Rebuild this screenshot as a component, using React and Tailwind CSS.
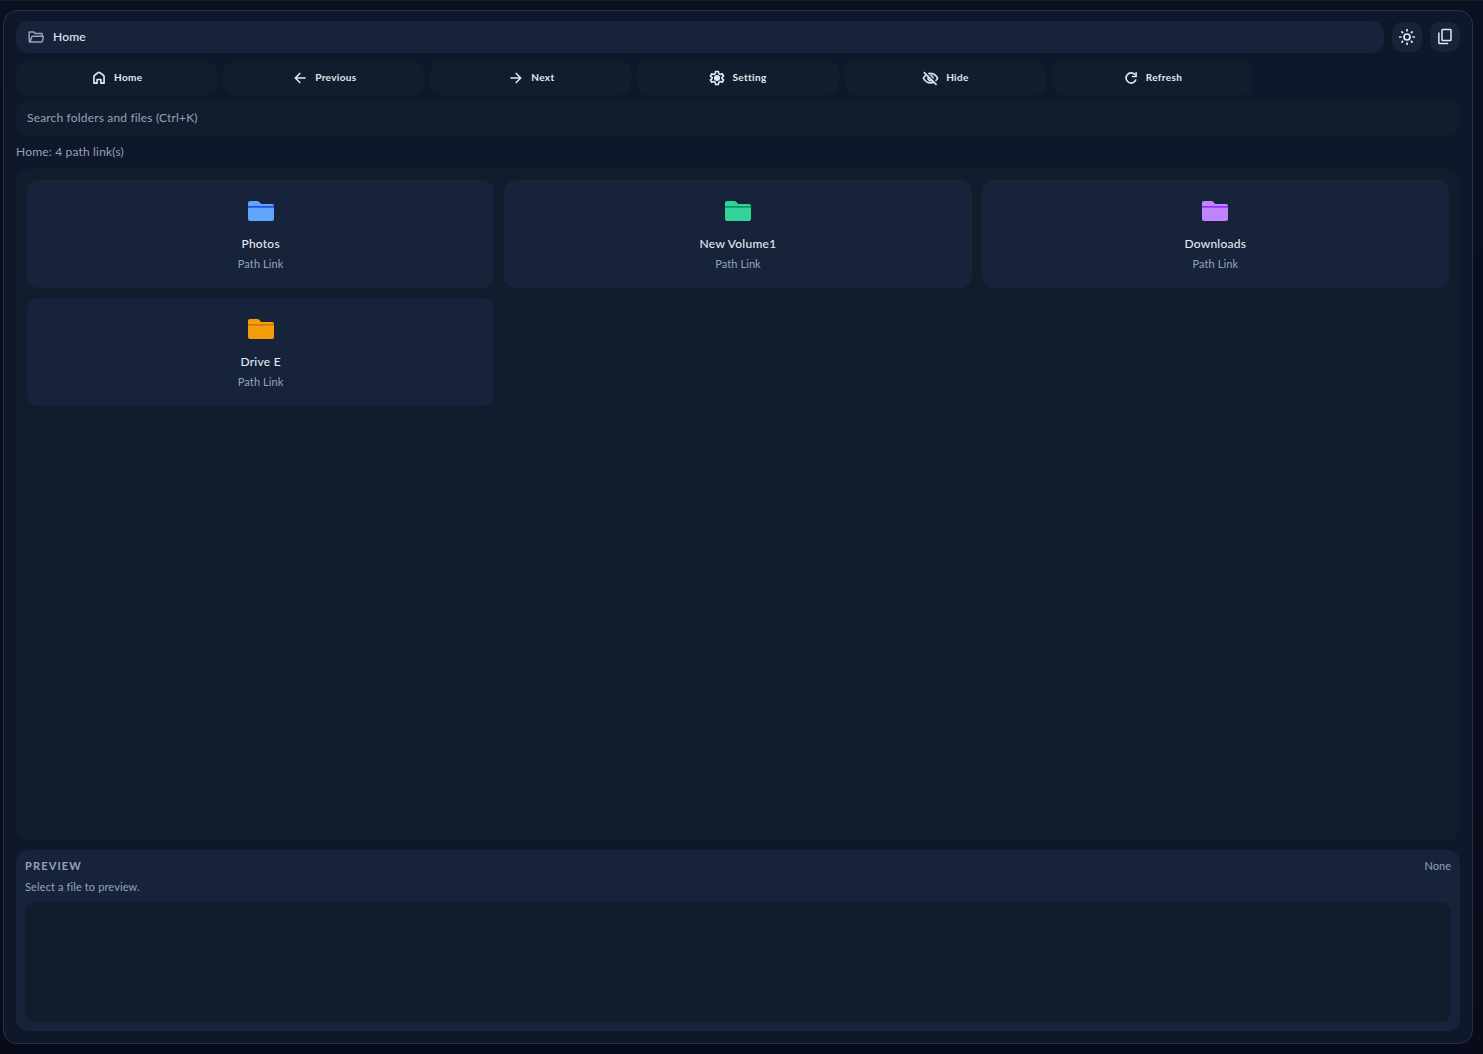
import { useState } from "react";

const iconProps = {
  viewBox: "0 0 24 24",
  fill: "none",
  stroke: "currentColor",
  strokeWidth: 2,
};

const HomeIcon = () => (
  <svg {...iconProps} strokeWidth={2.5} className="h-4 w-4 shrink-0">
    <path d="M4.4 19.8V10c0-.9.4-1.6 1.1-2.1l5.2-3.9c.8-.6 1.8-.6 2.6 0l5.2 3.9c.7.5 1.1 1.2 1.1 2.1v9.8h-4.8v-5.6H9.2v5.6z" strokeLinejoin="round" />
  </svg>
);

const BackIcon = () => (
  <svg {...iconProps} strokeWidth={2.3} className="h-4 w-4 shrink-0">
    <path d="M20.4 12H5M12.4 4.6L5 12l7.4 7.4" />
  </svg>
);

const NextIcon = () => (
  <svg {...iconProps} strokeWidth={2.3} className="h-4 w-4 shrink-0">
    <path d="M3.6 12H19M11.6 4.6L19 12l-7.4 7.4" />
  </svg>
);

const SettingIcon = () => (
  <svg {...iconProps} strokeWidth={2.5} className="h-4 w-4 shrink-0">
    <path
      d="M10 2.2h4l.6 3.2 2.2 1.3 3.1-1.1 2 3.5-2.5 2.1v1.6l2.5 2.1-2 3.5-3.1-1.1-2.2 1.3-.6 3.2h-4l-.6-3.2-2.2-1.3-3.1 1.1-2-3.5 2.5-2.1v-1.6L2.1 9.1l2-3.5 3.1 1.1 2.2-1.3z"
      strokeLinejoin="round"
    />
    <circle cx="12" cy="12" r="4.6" fill="currentColor" stroke="none" />
  </svg>
);

const HideIcon = () => (
  <svg viewBox="0 0 24 24" fill="currentColor" stroke="currentColor" strokeWidth="0.4" className="h-[17px] w-[17px] shrink-0">
    <path d="M12 6a9.77 9.77 0 0 1 8.82 5.5 9.65 9.65 0 0 1-2.41 3.12l1.41 1.41c1.39-1.23 2.49-2.77 3.18-4.53C21.27 7.11 17 4 12 4c-1.27 0-2.49.2-3.64.57l1.65 1.65C10.66 6.09 11.32 6 12 6zm-1.07 1.14L13 9.21c.57.25 1.03.71 1.28 1.28l2.07 2.07c.08-.34.14-.7.14-1.07C16.5 9.01 14.48 7 12 7c-.37 0-.72.05-1.07.14zM2.01 3.87l2.68 2.68A11.74 11.74 0 0 0 1 11.5C2.73 15.89 7 19 12 19c1.52 0 2.98-.29 4.32-.82l3.42 3.42 1.41-1.41L3.42 2.45 2.01 3.87zm7.5 7.5 2.61 2.61c-.04.01-.08.02-.12.02a2.5 2.5 0 0 1-2.5-2.5c0-.05.01-.08.01-.13zm-3.4-3.4 1.75 1.75a4.6 4.6 0 0 0-.36 1.78 4.507 4.507 0 0 0 6.27 4.14l.98.98c-.88.24-1.8.38-2.75.38a9.77 9.77 0 0 1-8.82-5.5c.7-1.43 1.72-2.61 2.93-3.53z" />
  </svg>
);

const RefreshIcon = () => (
  <svg {...iconProps} strokeWidth={2.5} className="h-4 w-4 shrink-0">
    <path d="M18 7A7.6 7.6 0 1 0 19.4 14.4" />
    <path d="M19.6 3.4v6.4h-6.4" />
  </svg>
);

const SunIcon = () => (
  <svg {...iconProps} strokeWidth={2.3} className="h-[18px] w-[18px]">
    <circle cx="12" cy="12" r="4" />
    <path d="M12 1.3v3.5M12 19.2v3.5M1.3 12h3.5M19.2 12h3.5M4.6 4.6l2.1 2.1M17.3 17.3l2.1 2.1M4.6 19.4l2.1-2.1M17.3 6.7l2.1-2.1" />
  </svg>
);

const CopyIcon = () => (
  <svg {...iconProps} className="h-[18px] w-[18px]">
    <rect x="8" y="2" width="12" height="14.8" rx="1" />
    <path d="M3.8 6v13.8a1 1 0 0 0 1 1h11.4" />
  </svg>
);

const OpenFolderIcon = () => (
  <svg viewBox="0 0 16 12" fill="none" stroke="currentColor" strokeWidth="1.5" strokeLinejoin="round" className="h-3 w-4 shrink-0">
    <path d="M14 4.7V2.6H7.4L5.7.9H1.2v9.6M1.2 10.6c.2.4.5.5.8.5h11.2c.6 0 1-.3 1.2-.9l.9-3.8c.2-.7-.3-1.2-1-1.2H4.9c-.6 0-1 .3-1.2.9L2.2 10.6" />
  </svg>
);

const FolderIcon = ({ color, line }) => (
  <svg viewBox="0 0 26 20" className="h-5 w-[26px]">
    <path d="M2 0h7.4c.7 0 1.2.2 1.7.7L13.2 3H24a2 2 0 0 1 2 2v13a2 2 0 0 1-2 2H2a2 2 0 0 1-2-2V2a2 2 0 0 1 2-2z" fill={color} />
    <path d="M0 5h26v1.7H0z" fill={line} />
  </svg>
);

const navItems = [
  { label: "Home", icon: HomeIcon, width: "w-[29px]" },
  { label: "Previous", icon: BackIcon, width: "w-[41px]" },
  { label: "Next", icon: NextIcon, width: "w-[23px]" },
  { label: "Setting", icon: SettingIcon, width: "w-[35px]" },
  { label: "Hide", icon: HideIcon, width: "w-[23px]" },
  { label: "Refresh", icon: RefreshIcon, width: "w-[37px]" },
];

const folders = [
  { name: "Photos", color: "#60a5fa", line: "#1d4ed8" },
  { name: "New Volume1", color: "#34d399", line: "#059669" },
  { name: "Downloads", color: "#c084fc", line: "#9333ea" },
  { name: "Drive E", color: "#f59e0b", line: "#d97706" },
];

const App = () => {
  const [search, setSearch] = useState("");

  return (
    <div className="h-screen border-t border-[#1c1c1c] bg-linear-to-b from-[#0a1020] to-[#080b1a] pt-[9px] pr-[10px] pb-[10px] pl-[3px] font-['Lato',sans-serif] text-[#e2e8f0]">
      <div className="flex h-full flex-col rounded-[14px] border border-[#293145] bg-[#0f172a] px-3 pt-[10px] pb-3">
        <div className="flex items-center gap-2">
          <div className="flex h-8 flex-1 items-center gap-[9px] rounded-xl bg-[#17233b] px-3">
            <span className="text-[#94a3b8]">
              <OpenFolderIcon />
            </span>
            <span className="pb-px text-[12px] leading-4 font-medium tracking-[0.2px]">Home</span>
          </div>
          <button className="flex h-[30px] w-[30px] items-center justify-center rounded-[10px] bg-[#17233b]">
            <SunIcon />
          </button>
          <button className="flex h-[30px] w-[30px] items-center justify-center rounded-[10px] bg-[#17233b]">
            <CopyIcon />
          </button>
        </div>

        <div className="mt-2 grid grid-cols-7 gap-[6px]">
          {navItems.map(({ label, icon: Icon, width }) => (
            <button
              key={label}
              className="flex h-[34px] items-center justify-center gap-[7px] rounded-[10px] bg-[#111c2d] pl-px text-[10px] font-bold tracking-[0.35px]"
            >
              <Icon />
              <span className={`${width} pb-[2px] text-left whitespace-nowrap`}>{label}</span>
            </button>
          ))}
        </div>

        <input
          type="text"
          value={search}
          onChange={(e) => setSearch(e.target.value)}
          placeholder="Search folders and files (Ctrl+K)"
          className="mt-[6px] h-[34px] w-full rounded-[10px] bg-[#111c2d] px-[11px] pb-[2px] text-[12px] tracking-[0.17px] outline-none placeholder:text-[#94a3b8]"
        />
        <p className="mt-[9px] text-[12px] leading-4 tracking-[0.18px] text-[#94a3b8]">Home: 4 path link(s)</p>

        {/* folders */}
        <div className="mt-[9px] grid flex-1 auto-rows-[108px] grid-cols-3 content-start gap-[10px] rounded-xl bg-[#111c2d] p-[11px]">
          {folders.map((folder) => (
            <div key={folder.name} className="flex flex-col items-center rounded-xl bg-[#17233b] pt-[21px]">
              <FolderIcon color={folder.color} line={folder.line} />
              <p className="mt-[15px] text-[12px] leading-4 font-medium tracking-[0.25px]">{folder.name}</p>
              <p className="mt-1 text-[11px] leading-4 tracking-[0.1px] text-[#94a3b8]">Path Link</p>
            </div>
          ))}
        </div>

        {/* preview */}
        <div className="mt-[10px] h-[181px] rounded-xl bg-[#17233b] px-[9px] pt-2">
          <div className="flex items-center justify-between text-[11px] leading-4 text-[#94a3b8]">
            <h2 className="font-bold tracking-[1.15px]">PREVIEW</h2>
            <span>None</span>
          </div>
          <p className="mt-[5px] text-[11px] leading-4 tracking-[0.12px] text-[#94a3b8]">Select a file to preview.</p>
          <div className="mt-[7px] h-[120px] rounded-[10px] bg-[#111c2d]"></div>
        </div>
      </div>
    </div>
  );
};

export default App;
